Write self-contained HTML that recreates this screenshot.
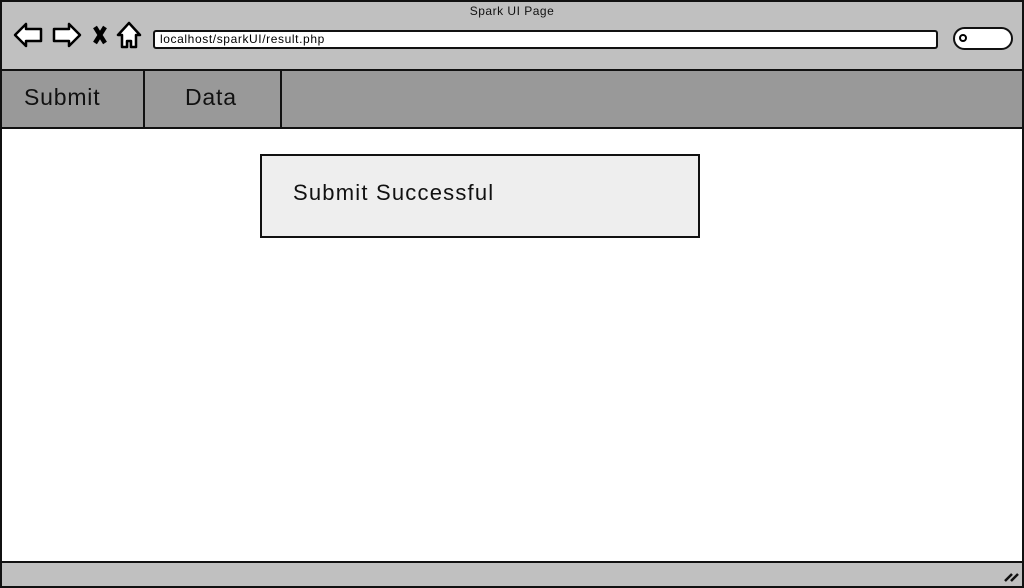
<!DOCTYPE html>
<html><head><style>
*{margin:0;padding:0;box-sizing:border-box}
body{width:1024px;height:588px;overflow:hidden;background:#fff;font-family:"Liberation Sans",sans-serif;position:relative}
.abs{position:absolute}
</style></head><body>
<div class="abs" style="left:0;top:0;width:1024px;height:588px;border:2px solid #111"></div>
<div class="abs" style="left:2px;top:2px;width:1020px;height:68px;background:#c0c0c0"></div>
<div class="abs" style="left:0;top:4px;width:1024px;text-align:center;font-size:12px;letter-spacing:0.5px;color:#111">Spark UI Page</div>
<svg class="abs" style="left:10px;top:18px" width="140" height="34" viewBox="0 0 140 34">
<path d="M5 17 L16 6 L16 11 L31 11 L31 23 L16 23 L16 28 Z" fill="#fff" stroke="#000" stroke-width="2.5" stroke-linejoin="round"/>
<path d="M70 17 L59 6 L59 11 L44 11 L44 23 L59 23 L59 28 Z" fill="#fff" stroke="#000" stroke-width="2.5" stroke-linejoin="round"/>
<path d="M85 9 L95 25 M95 9 L85 25" stroke="#000" stroke-width="4.5"/>
<path d="M119 5 L108 17 L112 17 L112 29 L117 29 L117 23 L121 23 L121 29 L126 29 L126 17 L130 17 Z" fill="#fff" stroke="#000" stroke-width="2.5" stroke-linejoin="round"/>
</svg>
<div class="abs" style="left:153px;top:30px;width:785px;height:19px;background:#fff;border:2px solid #111;border-radius:3px;font-size:12px;line-height:15px;padding-left:5px;letter-spacing:0.6px;color:#000">localhost/sparkUI/result.php</div>
<div class="abs" style="left:953px;top:27px;width:60px;height:23px;background:#fff;border:2px solid #111;border-radius:12px"></div>
<div class="abs" style="left:959px;top:34px;width:8px;height:8px;border:2px solid #000;border-radius:50%"></div>
<div class="abs" style="left:2px;top:69px;width:1020px;height:60px;background:#999;border-top:2px solid #111;border-bottom:2px solid #111"></div>
<div class="abs" style="left:143px;top:69px;width:2px;height:60px;background:#111"></div>
<div class="abs" style="left:280px;top:69px;width:2px;height:60px;background:#111"></div>
<div class="abs" style="left:24px;top:84px;font-size:23px;letter-spacing:0.8px;color:#111">Submit</div>
<div class="abs" style="left:185px;top:84px;font-size:23px;letter-spacing:0.8px;color:#111">Data</div>
<div class="abs" style="left:260px;top:154px;width:440px;height:84px;background:#eee;border:2px solid #111"></div>
<div class="abs" style="left:293px;top:180px;font-size:22px;letter-spacing:1.2px;color:#111">Submit Successful</div>
<div class="abs" style="left:2px;top:561px;width:1020px;height:25px;background:#c0c0c0;border-top:2px solid #111"></div>
<svg class="abs" style="left:1003px;top:570px" width="16" height="12"><path d="M2 11 L9 4 M8 11 L15 4" stroke="#111" stroke-width="2.5"/></svg>
</body></html>
